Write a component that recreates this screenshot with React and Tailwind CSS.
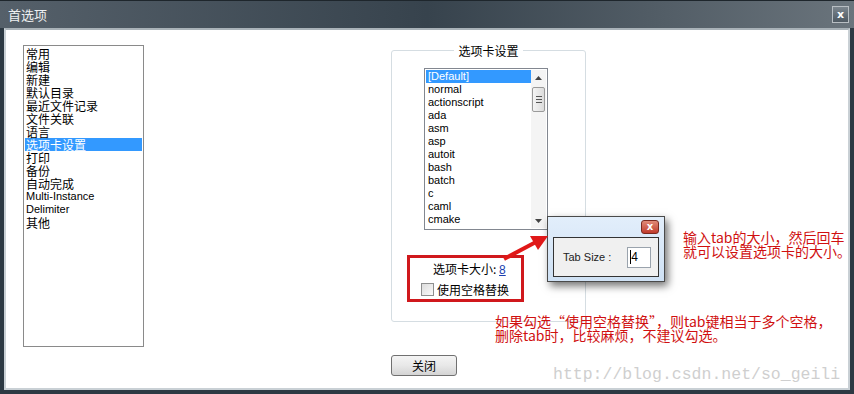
import React from "react";

const cjk = { fontFamily: '"Noto Sans CJK SC", "Liberation Sans", sans-serif' };

const categories = [
  "常用",
  "编辑",
  "新建",
  "默认目录",
  "最近文件记录",
  "文件关联",
  "语言",
  "选项卡设置",
  "打印",
  "备份",
  "自动完成",
  "Multi-Instance",
  "Delimiter",
  "其他",
];

const langs = [
  "[Default]",
  "normal",
  "actionscript",
  "ada",
  "asm",
  "asp",
  "autoit",
  "bash",
  "batch",
  "c",
  "caml",
  "cmake",
  "cobol",
];

function CategoryList() {
  return (
    <div className="w-[121px] h-[302px] border border-[#8a8a8a] bg-white pt-[1px] px-[1px] overflow-hidden">
      {categories.map((c) => {
        const latin = /^[A-Za-z-]+$/.test(c);
        const selected = c === "选项卡设置";
        return (
          <div
            key={c}
            className={
              "h-[13px] leading-[13px] px-[1px] whitespace-nowrap " +
              (selected ? "bg-[#3399ff] text-white" : "text-black") +
              (latin ? " text-[11px]" : " text-[12px]")
            }
            style={latin ? { fontFamily: '"Liberation Sans", sans-serif' } : cjk}
          >
            {c}
          </div>
        );
      })}
    </div>
  );
}

function LangList() {
  return (
    <div className="ml-[32px] w-[124px] h-[162px] border border-[#828790] bg-white flex p-[1px]">
      <div className="flex-1 overflow-hidden" style={{ fontFamily: '"Liberation Sans", sans-serif' }}>
        {langs.map((l, i) => (
          <div
            key={l}
            className={
              "h-[13px] leading-[13px] text-[11px] px-[2px] whitespace-nowrap " +
              (i === 0 ? "bg-[#3399ff] text-white" : "text-black")
            }
          >
            {l}
          </div>
        ))}
      </div>
      <div className="w-[15px] flex flex-col items-center bg-[#f4f4f4]">
        <div className="h-[15px] flex items-center justify-center">
          <svg width="7" height="4" viewBox="0 0 7 4">
            <path d="M0 4L3.5 0L7 4Z" fill="#444" />
          </svg>
        </div>
        <div className="mt-[2px] w-[13px] h-[25px] rounded-[2px] border border-[#9a9a9a] bg-gradient-to-r from-[#f4f4f4] to-[#dcdcdc] flex flex-col items-center justify-center gap-[2px]">
          <div className="w-[6px] h-[1px] bg-[#555]" />
          <div className="w-[6px] h-[1px] bg-[#555]" />
          <div className="w-[6px] h-[1px] bg-[#555]" />
        </div>
        <div className="flex-1" />
        <div className="h-[15px] flex items-center justify-center">
          <svg width="7" height="4" viewBox="0 0 7 4">
            <path d="M0 0L3.5 4L7 0Z" fill="#444" />
          </svg>
        </div>
      </div>
    </div>
  );
}

function TabGroup() {
  return (
    <div className="relative mt-[5px] w-[195px] h-[272px] border border-[#d5dde2] rounded-[3px] pt-[17px]">
      <div className="absolute left-0 right-0 -top-[8px] flex justify-center">
        <span className="bg-white px-[4px] text-[12px] leading-[15px] text-black" style={cjk}>
          选项卡设置
        </span>
      </div>
      <LangList />
      <div className="ml-[15px] mt-[25px] w-[117px] h-[47px] border-[3px] border-[#d0181c] pt-[3px]">
        <div className="pl-[23px] text-[12px] leading-[15px] text-black" style={cjk}>
          选项卡大小:{" "}
          <span className="text-[#1a3fb0] underline" style={{ fontFamily: '"Liberation Sans", sans-serif' }}>
            8
          </span>
        </div>
        <div className="flex items-center pl-[11px] mt-[4px]">
          <div className="w-[13px] h-[13px] border border-[#8e8f8f] bg-gradient-to-br from-[#dcdcdc] to-[#fafafa]" />
          <span className="ml-[3px] text-[12px] leading-[15px] text-black" style={cjk}>
            使用空格替换
          </span>
        </div>
      </div>
    </div>
  );
}

function TabSizeDialog() {
  return (
    <div className="absolute left-[547px] top-[216px] w-[118px] h-[66px] border border-[#4a4a4a] bg-gradient-to-b from-[#e2eefb] to-[#cfe1f4] shadow-[3px_4px_8px_rgba(0,0,0,0.55)] px-[5px] flex flex-col">
      <div className="h-[20px] flex justify-end items-start pt-[3px]">
        <div
          className="w-[18px] h-[14px] rounded-[3px] border border-[#7a2a20] bg-gradient-to-b from-[#e08a78] to-[#c0392b] flex items-center justify-center text-white text-[10px] font-bold leading-none"
          style={{ fontFamily: '"DejaVu Sans", sans-serif' }}
        >
          x
        </div>
      </div>
      <div className="h-[40px] border border-[#333] bg-[#f0f0f0] flex items-center pl-[9px]">
        <span className="text-[11px] text-[#222]" style={{ fontFamily: '"Liberation Sans", sans-serif' }}>
          Tab Size :
        </span>
        <div className="ml-[16px] w-[24px] h-[21px] border border-[#9aa3ad] bg-white flex items-center pl-[2px]">
          <span className="border-l border-black h-[14px]" />
          <span className="text-[12px] leading-none text-black" style={{ fontFamily: '"Liberation Sans", sans-serif' }}>
            4
          </span>
        </div>
      </div>
    </div>
  );
}

export default function App() {
  return (
    <div className="relative w-[854px] h-[394px] bg-[#2d3943] flex flex-col overflow-hidden">
      {/* title bar */}
      <div className="shrink-0 h-[28px] flex items-center justify-between pl-[8px] pr-[5px] bg-gradient-to-r from-[#55606a] via-[#37434d] to-[#6a747c] border-t border-[#1e262c]">
        <span className="text-[13px] text-[#eef0f2]" style={cjk}>
          首选项
        </span>
        <div
          className="w-[17px] h-[17px] border border-[#b8bec3] bg-gradient-to-b from-[#7c868e] to-[#4f5a63] flex items-center justify-center text-white text-[11px] font-bold leading-none"
          style={{ fontFamily: '"DejaVu Sans", sans-serif' }}
        >
          x
        </div>
      </div>

      {/* body */}
      <div className="flex-1 min-h-0 flex px-[4px] pb-[4px]">
        <div className="flex-1 border-[2px] border-[#c9d0d5] border-t-[#a9b2b8] bg-white flex overflow-hidden">
          <div className="flex-1 flex items-start pl-[17px] pt-[15px]">
            <CategoryList />
            <div className="ml-[247px] flex flex-col items-start">
              <TabGroup />
              <button
                className="mt-[33px] w-[66px] h-[21px] rounded-[3px] border border-[#707070] bg-gradient-to-b from-[#f4f4f4] via-[#e8e8e8] to-[#d4d4d4] text-[12px] text-black flex items-center justify-center"
                style={cjk}
              >
                关闭
              </button>
            </div>
          </div>
        </div>
      </div>

      <TabSizeDialog />

      {/* red arrow */}
      <svg className="absolute left-[500px] top-[228px]" width="52" height="36" viewBox="0 0 52 36">
        <line x1="4" y1="31" x2="36" y2="14" stroke="#e01818" strokeWidth="4" />
        <path d="M48 8L30 8L38 22Z" fill="#e01818" />
      </svg>

      {/* annotations */}
      <div className="absolute left-[683px] top-[230px] text-[14px] leading-[14px] text-[#d01010]" style={cjk}>
        <div>输入tab的大小，然后回车</div>
        <div>就可以设置选项卡的大小。</div>
      </div>
      <div className="absolute left-[495px] top-[314px] text-[14px] leading-[14px] text-[#d01010]" style={cjk}>
        <div>如果勾选“使用空格替换”，则tab键相当于多个空格，</div>
        <div>删除tab时，比较麻烦，不建议勾选。</div>
      </div>

      {/* watermark */}
      <div
        className="absolute left-[553px] top-[364px] text-[16.5px] leading-[22px] text-[#cfcfcf]"
        style={{ fontFamily: '"Liberation Mono", monospace' }}
      >
        http://blog.csdn.net/so_geili
      </div>
    </div>
  );
}
